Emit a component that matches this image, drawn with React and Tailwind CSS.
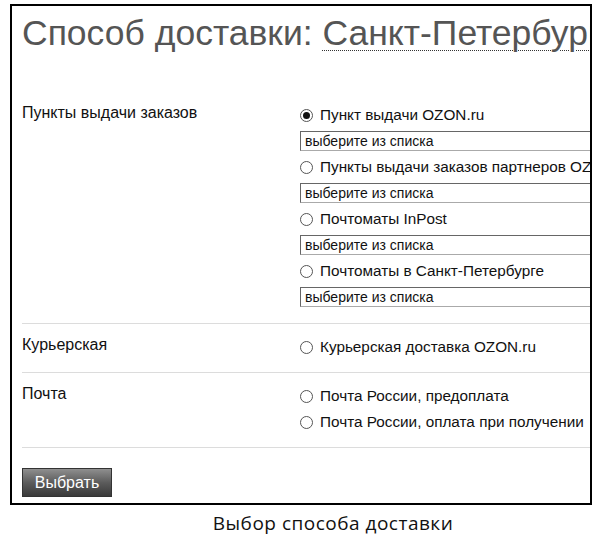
import React from 'react';

const Radio = ({ checked, label }) => (
    <label className="flex items-center h-[24px] text-[15.3px] text-[#111] whitespace-nowrap">
        <span className="w-[13px] h-[13px] rounded-full border border-[#555] bg-white flex items-center justify-center shrink-0">
            {checked && <span className="w-[7px] h-[7px] rounded-full bg-[#111]" />}
        </span>
        <span className="ml-[7px]">{label}</span>
    </label>
);

const Select = () => (
    <div className="mt-[4px] h-[20px] w-[320px] border border-t-[#666] border-l-[#666] border-r-[#999] border-b-[#aaa] bg-white flex items-center pl-[4px] text-[14px] text-[#111] leading-none">
        выберите из списка
    </div>
);

const Section = ({ title, children, first }) => (
    <div className={`flex border-b border-[#dcdcdc] ${first ? 'pt-[12px] pb-[16px]' : 'pt-[11px] pb-[13px]'}`}>
        <div className="w-[278px] shrink-0 text-[16px] leading-[20px] text-[#111]">{title}</div>
        <div className="flex flex-col">{children}</div>
    </div>
);

const pickupOptions = [
    { label: 'Пункт выдачи OZON.ru', checked: true },
    { label: 'Пункты выдачи заказов партнеров OZON.ru' },
    { label: 'Почтоматы InPost' },
    { label: 'Почтоматы в Санкт-Петербурге' },
];

export default function App() {
    return (
        <div className="w-[600px] h-[537px] bg-white overflow-hidden font-['Liberation_Sans',Arial,sans-serif]">
            <div className="ml-[10px] mt-[4px] w-[582px] h-[501px] border-2 border-black overflow-hidden">
                <div className="h-[85px] pt-[7px] pl-[10px] whitespace-nowrap text-[35.5px] leading-[40px] text-[#555]">
                    Способ доставки:{' '}
                    <span className="underline decoration-dotted decoration-[#333] decoration-1 underline-offset-[5px]">
                        Санкт-Петербург
                    </span>
                </div>

                <div className="ml-[10px] w-[600px]">
                    <Section title="Пункты выдачи заказов" first>
                        {pickupOptions.map((o, i) => (
                            <div key={o.label} className={i > 0 ? 'mt-[4px]' : ''}>
                                <Radio label={o.label} checked={o.checked} />
                                <Select />
                            </div>
                        ))}
                    </Section>
                    <Section title="Курьерская">
                        <Radio label="Курьерская доставка OZON.ru" />
                    </Section>
                    <Section title="Почта">
                        <Radio label="Почта России, предоплата" />
                        <div className="mt-[2px]">
                            <Radio label="Почта России, оплата при получении" />
                        </div>
                    </Section>

                    <button className="mt-[20px] h-[29px] w-[90px] border border-[#333] bg-gradient-to-b from-[#8f8f8f] via-[#5c5c5c] to-[#3a3a3a] text-white text-[16px] leading-none">
                        Выбрать
                    </button>
                </div>
            </div>
            <div className="mt-[6px] h-[24px] text-center pl-[66px] text-[19px] leading-[24px] tracking-[0.5px] text-[#111] font-['Open_Sans',sans-serif]">
                Выбор способа доставки
            </div>
        </div>
    );
}
